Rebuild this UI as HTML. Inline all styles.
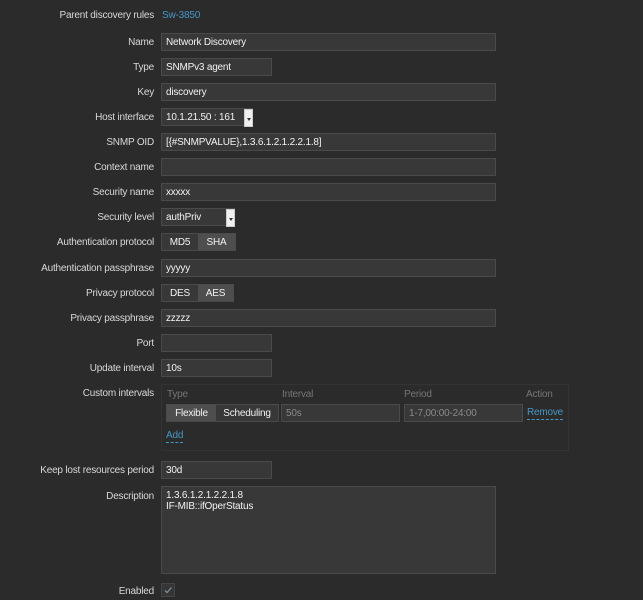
<!DOCTYPE html>
<html><head><meta charset="utf-8"><style>
body{margin:0;width:643px;height:600px;background:#2b2b2b;font-family:"Liberation Sans",Arial,sans-serif;font-size:10px;letter-spacing:-0.2px;color:#f2f2f2;position:relative;overflow:hidden}
.l{position:absolute;right:489px;color:#d8d8d8;white-space:nowrap;line-height:14px;margin-top:1px}
.i{position:absolute;left:161px;height:16px;background:#383838;border:1px solid #4a4a4a;line-height:17px;padding-left:4px;box-sizing:content-box;color:#f2f2f2;white-space:nowrap}
.w{width:329px}.s{width:105px}
.arr{position:absolute;top:0;right:-1px;width:7px;height:16px;background:#f0f0f0;border:1px solid #ccc}
.arr:after{content:"";position:absolute;left:2px;top:8px;border-left:2px solid transparent;border-right:2px solid transparent;border-top:3px solid #333}
.rg{position:absolute;left:161px;height:16px;border:1px solid #4a4a4a;background:#383838;display:flex;line-height:17px}
.rg span{text-align:center;display:block}
.sel{background:#4e4e4e}
.h{position:absolute;top:389px;color:#767676}
a{color:#4796c4;text-decoration:none;border-bottom:1px dashed #4796c4;position:absolute;line-height:12px}
</style></head><body>
<div class="l" style="top:8px">Parent discovery rules</div>
<div style="position:absolute;left:162px;top:9px;color:#4796c4;line-height:14px">Sw-3850</div>

<div class="l" style="top:35px">Name</div><div class="i w" style="top:33px">Network Discovery</div>
<div class="l" style="top:60px">Type</div><div class="i s" style="top:58px">SNMPv3 agent</div>
<div class="l" style="top:85px">Key</div><div class="i w" style="top:83px">discovery</div>
<div class="l" style="top:110px">Host interface</div><div class="i" style="top:108px;width:86px">10.1.21.50 : 161<div class="arr"></div></div>
<div class="l" style="top:135px">SNMP OID</div><div class="i w" style="top:133px">[{#SNMPVALUE},1.3.6.1.2.1.2.2.1.8]</div>
<div class="l" style="top:160px">Context name</div><div class="i w" style="top:158px"></div>
<div class="l" style="top:185px">Security name</div><div class="i w" style="top:183px">xxxxx</div>
<div class="l" style="top:210px">Security level</div><div class="i" style="top:208px;width:68px">authPriv<div class="arr"></div></div>
<div class="l" style="top:235px">Authentication protocol</div>
<div class="rg" style="top:233px"><span style="width:36px">MD5</span><span class="sel" style="width:37px">SHA</span></div>
<div class="l" style="top:261px">Authentication passphrase</div><div class="i w" style="top:259px">yyyyy</div>
<div class="l" style="top:286px">Privacy protocol</div>
<div class="rg" style="top:284px"><span style="width:36px">DES</span><span class="sel" style="width:35px">AES</span></div>
<div class="l" style="top:311px">Privacy passphrase</div><div class="i w" style="top:309px">zzzzz</div>
<div class="l" style="top:336px">Port</div><div class="i s" style="top:334px"></div>
<div class="l" style="top:361px">Update interval</div><div class="i s" style="top:359px">10s</div>
<div class="l" style="top:386px">Custom intervals</div>
<div style="position:absolute;left:161px;top:384px;width:406px;height:65px;border:1px solid #333;background:#2b2b2b"></div>
<div class="h" style="left:167px">Type</div><div class="h" style="left:282px">Interval</div><div class="h" style="left:404px">Period</div><div class="h" style="left:526px">Action</div>
<div class="rg" style="top:404px;left:166px;background:#383838"><span class="sel" style="width:49px">Flexible</span><span style="width:62px">Scheduling</span></div>
<div class="i" style="top:404px;left:281px;width:113px;color:#8a8a8a">50s</div>
<div class="i" style="top:404px;left:404px;width:113px;color:#8a8a8a">1-7,00:00-24:00</div>
<a style="left:527px;top:407px">Remove</a>
<a style="left:166px;top:430px">Add</a>
<div class="l" style="top:463px">Keep lost resources period</div><div class="i s" style="top:461px">30d</div>
<div class="l" style="top:489px">Description</div>
<div class="i" style="top:486px;width:329px;line-height:11px;padding-top:3px;height:83px">1.3.6.1.2.1.2.2.1.8<br>IF-MIB::ifOperStatus</div>
<div class="l" style="top:584px">Enabled</div>
<div style="position:absolute;left:161px;top:583px;width:12px;height:12px;background:#353535;border:1px solid #444">
<svg width="12" height="12" viewBox="0 0 12 12" style="display:block"><path d="M3 6.5L5 8.5L9.5 3.5" stroke="#7f8a96" stroke-width="1.3" fill="none"/></svg></div>
</body></html>
